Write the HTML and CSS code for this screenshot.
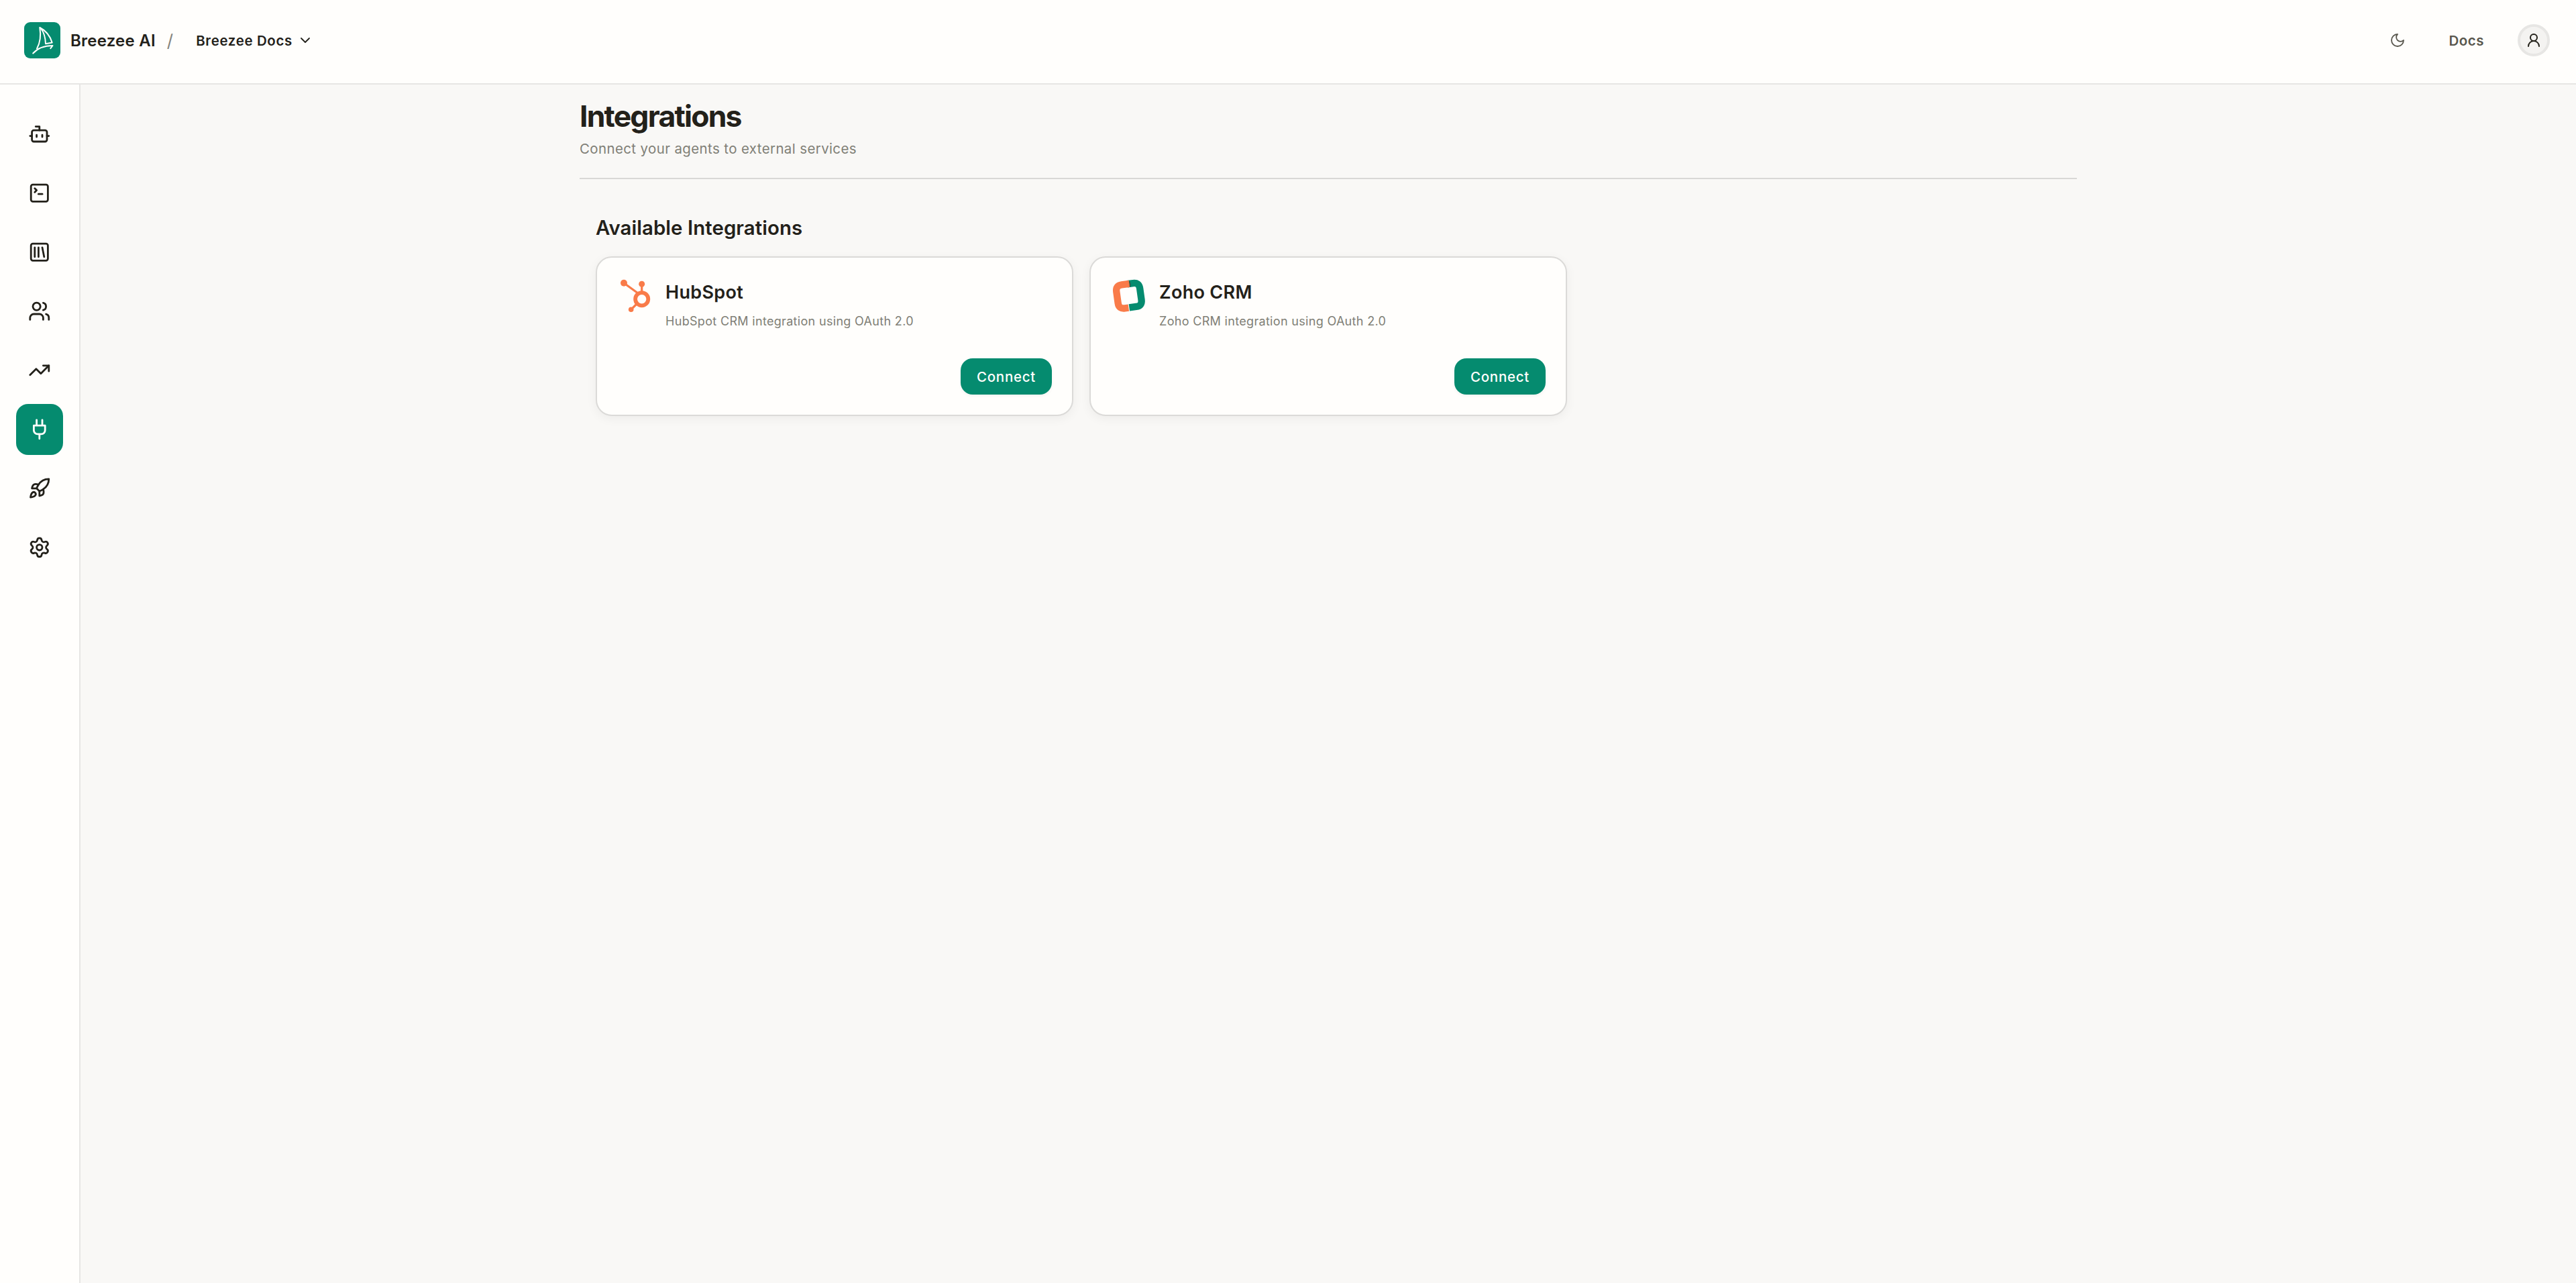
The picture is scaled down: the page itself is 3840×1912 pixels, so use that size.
FILE: index.html
```
<!DOCTYPE html>
<html lang="en">
<head>
    <meta charset="UTF-8">
    <meta name="viewport" content="width=device-width, initial-scale=1.0">
    <title>Breezee AI - Integrations</title>
    <link rel="stylesheet" href="styles.css">
</head>
<body>
    <header class="header">
        <div class="header-left">
            <svg class="logo" viewBox="0 0 54 54">
                <rect width="54" height="54" rx="9" fill="#058b6f"/>
                <g fill="none" stroke="#fffefc" stroke-width="2" stroke-linecap="round" stroke-linejoin="round">
                    <path d="M19 39.5C23.5 31.5 25.5 22 23.3 8C32 12.5 38.5 20 41.7 30.5L32 32.3C31.7 24 30 16 25.3 10"/>
                    <path d="M13.2 46.5C20 39 31 35 42.5 35L39.3 39.2"/>
                </g>
            </svg>
            <span class="brand">Breezee AI</span>
            <span class="slash">/</span>
            <button class="project">
                Breezee Docs
                <svg class="icon-sm" viewBox="0 0 24 24"><path d="m6 9 6 6 6-6"/></svg>
            </button>
        </div>
        <div class="header-right">
            <svg class="icon-sm muted" viewBox="0 0 24 24"><path d="M12 3a6 6 0 0 0 9 9 9 9 0 1 1-9-9Z"/></svg>
            <a class="docs">Docs</a>
            <div class="avatar">
                <svg class="icon-sm" viewBox="0 0 24 24"><circle cx="12" cy="8" r="5"/><path d="M20 21a8 8 0 0 0-16 0"/></svg>
            </div>
        </div>
    </header>

    <div class="layout">
        <nav class="sidebar">
            <a class="nav-item"><svg class="icon" viewBox="0 0 24 24"><path d="M12 8V4H8"/><rect width="16" height="12" x="4" y="8" rx="2"/><path d="M2 14h2M20 14h2M15 13v2M9 13v2"/></svg></a>
            <a class="nav-item"><svg class="icon" viewBox="0 0 24 24"><path d="m7 11 2-2-2-2"/><path d="M11 13h4"/><rect width="18" height="18" x="3" y="3" rx="2"/></svg></a>
            <a class="nav-item"><svg class="icon" viewBox="0 0 24 24"><rect width="18" height="18" x="3" y="3" rx="2"/><path d="M7 7v10M11 7v10M15 7l2 10"/></svg></a>
            <a class="nav-item"><svg class="icon" viewBox="0 0 24 24"><path d="M16 21v-2a4 4 0 0 0-4-4H6a4 4 0 0 0-4 4v2"/><circle cx="9" cy="7" r="4"/><path d="M22 21v-2a4 4 0 0 0-3-3.87M16 3.13a4 4 0 0 1 0 7.75"/></svg></a>
            <a class="nav-item"><svg class="icon" viewBox="0 0 24 24"><path d="M22 7l-8.5 8.5-5-5L2 17"/><path d="M16 7h6v6"/></svg></a>
            <a class="nav-item active"><svg class="icon" viewBox="0 0 24 24"><path d="M12 22v-5M9 8V2M15 8V2M18 8v5a4 4 0 0 1-4 4h-4a4 4 0 0 1-4-4V8Z"/></svg></a>
            <a class="nav-item"><svg class="icon" viewBox="0 0 24 24"><path d="M4.5 16.5c-1.5 1.26-2 5-2 5s3.74-.5 5-2c.71-.84.7-2.13-.09-2.91a2.18 2.18 0 0 0-2.91-.09z"/><path d="m12 15-3-3a22 22 0 0 1 2-3.95A12.88 12.88 0 0 1 22 2c0 2.72-.78 7.5-6 11a22.35 22.35 0 0 1-4 2z"/><path d="M9 12H4s.55-3.03 2-4c1.62-1.08 5 0 5 0"/><path d="M12 15v5s3.03-.55 4-2c1.08-1.62 0-5 0-5"/></svg></a>
            <a class="nav-item"><svg class="icon" viewBox="0 0 24 24"><path d="M9.671 4.136a2.34 2.34 0 0 1 4.659 0 2.34 2.34 0 0 0 3.319 1.915 2.34 2.34 0 0 1 2.33 4.033 2.34 2.34 0 0 0 0 3.831 2.34 2.34 0 0 1-2.33 4.033 2.34 2.34 0 0 0-3.319 1.915 2.34 2.34 0 0 1-4.659 0 2.34 2.34 0 0 0-3.32-1.915 2.34 2.34 0 0 1-2.33-4.033 2.34 2.34 0 0 0 0-3.831A2.34 2.34 0 0 1 6.35 6.051a2.34 2.34 0 0 0 3.319-1.915"/><circle cx="12" cy="12" r="3"/></svg></a>
        </nav>

        <main class="main">
            <div class="page-header">
                <h1>Integrations</h1>
                <p>Connect your agents to external services</p>
            </div>

            <section class="section">
                <h2>Available Integrations</h2>
                <div class="cards">
                    <div class="card">
                        <svg class="card-logo" viewBox="0 0 54 54">
                            <g stroke="#f97b49" fill="none">
                                <path stroke-width="3.2" d="M10 7.7L31 23M36.7 9V22M20.7 47.3L29.5 38.5"/>
                                <circle cx="36.7" cy="31.7" r="9.6" stroke-width="5.8"/>
                            </g>
                            <g fill="#f97b49">
                                <circle cx="10" cy="7.7" r="5"/>
                                <circle cx="36.7" cy="9.3" r="4.5"/>
                                <circle cx="20.7" cy="47.3" r="3.8"/>
                            </g>
                        </svg>
                        <div class="card-body">
                            <h3>HubSpot</h3>
                            <p>HubSpot CRM integration using OAuth 2.0</p>
                        </div>
                        <button class="btn">Connect</button>
                    </div>

                    <div class="card">
                        <svg class="card-logo" viewBox="0 0 54 54">
                            <g transform="translate(26.9 26.7) rotate(-8)" fill="none" stroke-width="10.4">
                                <path stroke="#058b6f" d="M0 -17.6H8.6Q17.6 -17.6 17.6 -8.6V8.6Q17.6 17.6 8.6 17.6H-2"/>
                                <path stroke="#f97b49" d="M3 -17.6H-8.6Q-17.6 -17.6 -17.6 -8.6V8.6Q-17.6 17.6 -8.6 17.6H-3"/>
                                <path stroke="#3b4a3c" stroke-width="1.2" d="M3.4 -21Q5 -17.6 3.4 -13"/>
                            </g>
                        </svg>
                        <div class="card-body">
                            <h3>Zoho CRM</h3>
                            <p>Zoho CRM integration using OAuth 2.0</p>
                        </div>
                        <button class="btn">Connect</button>
                    </div>
                </div>
            </section>
        </main>
    </div>
</body>
</html>
```
FILE: styles.css
```
* {
    box-sizing: border-box;
    margin: 0;
    padding: 0;
}

body {
    display: flex;
    flex-direction: column;
    height: 100vh;
    background: #f9f8f6;
    color: #23211a;
    font-family: Inter, "Liberation Sans", sans-serif;
    font-size: 24px;
}

button {
    border: none;
    background: none;
    color: inherit;
    font-family: inherit;
    cursor: pointer;
}

svg {
    flex-shrink: 0;
}

.icon,
.icon-sm {
    fill: none;
    stroke: currentColor;
    stroke-width: 2;
    stroke-linecap: round;
    stroke-linejoin: round;
}

.icon {
    width: 33.6px;
    height: 33.6px;
}

.icon-sm {
    width: 24px;
    height: 24px;
    stroke-width: 1.8;
}

/* Header */
.header {
    display: flex;
    justify-content: space-between;
    align-items: center;
    height: 126px;
    padding: 0 39px 4px 36px;
    background: #fffefc;
    border-bottom: 2px solid #e7e6e4;
}

.header-left,
.header-right {
    display: flex;
    align-items: center;
}

.logo {
    width: 54px;
    height: 54px;
}

.brand {
    margin-left: 15px;
    font-weight: 600;
    letter-spacing: 0.24px;
}

.slash {
    margin-left: 17px;
    color: #85847c;
    font-size: 26px;
}

.project {
    display: flex;
    align-items: center;
    gap: 7px;
    margin-left: 34px;
    font-size: 20.5px;
    font-weight: 600;
    letter-spacing: 0.62px;
}

.muted,
.docs {
    color: #59574e;
}

.docs {
    margin-left: 65px;
    font-size: 20.5px;
    font-weight: 600;
    letter-spacing: 0.48px;
}

.avatar {
    display: flex;
    align-items: center;
    justify-content: center;
    width: 48px;
    height: 48px;
    margin-left: 50px;
    background: #f4f3f1;
    border: 4px solid #e7e6e4;
    border-radius: 50%;
}

.avatar svg {
    stroke-width: 2;
}

/* Sidebar */
.layout {
    display: flex;
    flex: 1;
}

.sidebar {
    display: flex;
    flex-direction: column;
    align-items: center;
    gap: 12px;
    width: 120px;
    padding-top: 36px;
    background: #fffefc;
    border-right: 2px solid #e7e6e4;
}

.nav-item {
    display: flex;
    align-items: center;
    justify-content: center;
    width: 70px;
    height: 76px;
    border-radius: 18px;
}

.nav-item.active {
    background: #058b6f;
    color: #fffefc;
}

/* Content */
.main {
    width: 2232px;
    margin: 0 auto;
    padding-top: 20px;
}

.page-header {
    height: 121px;
    border-bottom: 2px solid #d9d8d6;
}

h1 {
    font-size: 44.5px;
    font-weight: 700;
    line-height: 54px;
    letter-spacing: -1.8px;
}

.page-header p {
    margin-top: 7px;
    color: #807f76;
    font-size: 20.5px;
    line-height: 30px;
    letter-spacing: 0.37px;
}

.section {
    padding: 52px 24px 0;
}

h2 {
    font-size: 29.4px;
    font-weight: 600;
    line-height: 42px;
    letter-spacing: 0.07px;
}

.cards {
    display: grid;
    grid-template-columns: repeat(3, 1fr);
    gap: 24px;
    margin-top: 21px;
}

.card {
    display: grid;
    grid-template-columns: 54px 1fr;
    grid-template-rows: 1fr auto;
    column-gap: 18px;
    height: 238px;
    padding: 30px;
    background: #fffefc;
    border: 2px solid #dbdad8;
    border-radius: 24px;
    box-shadow: 0 4px 16px rgba(0, 0, 0, 0.05);
}

.card-logo {
    width: 54px;
    height: 54px;
}

.card-body {
    padding-top: 1px;
}

h3 {
    font-size: 27px;
    font-weight: 600;
    line-height: 42px;
    letter-spacing: 0.3px;
}

.card-body p {
    margin-top: 10px;
    color: #807f76;
    font-size: 18px;
    line-height: 24px;
    letter-spacing: 0.32px;
}

.btn {
    grid-column: 2;
    justify-self: end;
    width: 136px;
    height: 54px;
    background: #058b6f;
    border-radius: 18px;
    box-shadow: 0 2px 4px rgba(0, 0, 0, 0.05);
    color: #fffefc;
    font-size: 20.5px;
    font-weight: 500;
    letter-spacing: 0.75px;
}
```
